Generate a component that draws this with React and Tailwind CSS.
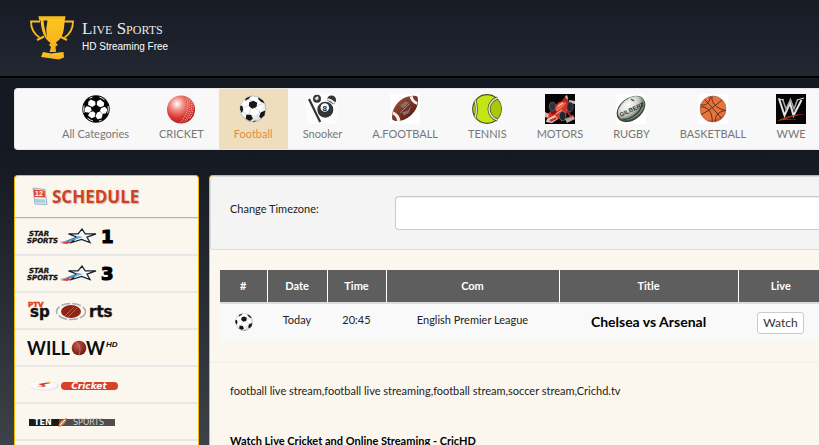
import React from 'react'

const BallIcon = () => (
  <svg width="30" height="30" viewBox="0 0 30 30">
    <circle cx="15" cy="15" r="13.7" fill="#050505" />
    <g fill="none" stroke="#fff" strokeWidth="0.9">
      <path d="M8.5 4.3A12.4 12.4 0 0 1 11.5 3.1M18.5 3.1A12.4 12.4 0 0 1 23.5 5.9M27 12A12.4 12.4 0 0 1 26.6 19.3M20.5 26.2A12.4 12.4 0 0 1 18 27M12 27A12.4 12.4 0 0 1 6.5 24.1M3.2 19A12.4 12.4 0 0 1 3.1 11.5" />
    </g>
    <g fill="#fff">
      <path d="M9.8 5.6l4.4 1.8.3 3.4-3.2 2.3-4.2-2 .2-3.3z" />
      <path d="M19.2 5.6l4 3.2-.5 3.2-3.7 1.3-3.2-2.4.2-3.5z" />
      <path d="M20.2 14l3.8-1.2 2.5 2.9-1.9 3.9-3.5.1-2.2-2.6z" />
      <path d="M16.2 18.4l2.6-.8 2.8 2.7-1 4-4 1-2.2-3.1z" />
      <path d="M8.9 18.3l3.2-1.1 2.3 1.8-.7 3.9-3.2 1.4-3.5-2.9z" />
      <path d="M5.9 12l4 1.4.8 3.2-2.8 2.1-3.8-.8-.7-3.2z" />
    </g>
  </svg>
)

const FootballIcon = ({ size = 30 }) => (
  <svg width={size} height={size} viewBox="0 0 30 30">
    <defs>
      <radialGradient id="soccer" cx="0.4" cy="0.35" r="0.7">
        <stop offset="0.6" stopColor="#fff" />
        <stop offset="1" stopColor="#cfcfcf" />
      </radialGradient>
    </defs>
    <circle cx="15" cy="15" r="13" fill="url(#soccer)" stroke="#999" strokeWidth="0.5" />
    <g stroke="#bbb" strokeWidth="0.6" fill="none">
      <path d="M15 7L10 5M18 12l6-2M13 14l-2 6M17 14l5 4M11 11l-7 4M11 20l6 3M22 18l-4 5M4 17l4 3" />
    </g>
    <g fill="#161616">
      <path d="M11.2 8.3l4.2-1.6 3.8 2-.7 4.4-4.3 1.6-3.3-2.7z" />
      <path d="M7.8 4.3L13 2.2l-2 2.4-4 2.4z" />
      <path d="M20.3 3.3l4.6 3.1 1.6 3.2-3.2-1.6-3-2.8z" />
      <path d="M2.1 12.3l2.2-.7.9 4.2-1.3 3.3-1.8-3.3z" />
      <path d="M22.6 18.4l4.7-1.8-.9 4.8-3.2 2.9-2-1.4z" />
      <path d="M8.4 20.4l4.8.7 1.7 3.6-3 2.2-4.2-2.2z" />
      <path d="M14.6 27.2l3.8-.7-2.2 1.4z" />
    </g>
  </svg>
)

const CricketIcon = () => (
  <svg width="30" height="30" viewBox="0 0 30 30">
    <defs>
      <radialGradient id="cricket" cx="0.36" cy="0.3" r="0.75">
        <stop offset="0" stopColor="#fff" />
        <stop offset="0.3" stopColor="#f0928a" />
        <stop offset="0.65" stopColor="#dc3834" />
        <stop offset="1" stopColor="#a81c1c" />
      </radialGradient>
    </defs>
    <circle cx="15" cy="15.5" r="14" fill="url(#cricket)" />
    <g fill="none" stroke="#fbb5ac" strokeWidth="0.9" strokeDasharray="1.4 0.8">
      <path d="M20.5 2.8c3 8 1.5 18-6.5 26" />
      <path d="M22.5 3.8c3 8 1.5 17.5-5.5 25" />
      <path d="M24.5 5.5c2.5 7 1 15.5-4.5 22" />
      <path d="M26.5 8c1.5 6 .5 12-3 17" />
    </g>
  </svg>
)

const SnookerIcon = () => (
  <svg width="30" height="30" viewBox="0 0 30 30">
    <rect width="30" height="30" fill="#fcfcfc" />
    <path d="M1 5.5l2-1 11.2 23-2 1z" fill="#333" />
    <circle cx="10" cy="4.8" r="4" fill="#333" />
    <path d="M7.5 4l3.5-2 .8 3-2.6 1.5z" fill="#ddd" />
    <circle cx="24.5" cy="6" r="4.6" fill="#333" />
    <path d="M20 4.5c3-.5 5 1 8.5 4l-2 1.5c-2-2.5-4-3.5-6.5-3.5z" fill="#eee" />
    <circle cx="18.3" cy="15.5" r="9" fill="#fcfcfc" />
    <circle cx="18.3" cy="15.7" r="8" fill="#333" />
    <circle cx="17.8" cy="13.5" r="4.3" fill="#fff" />
    <text x="17.8" y="16.5" textAnchor="middle" fontFamily="Liberation Sans" fontWeight="bold" fontSize="8" fill="#222">8</text>
  </svg>
)

const AmericanIcon = () => (
  <svg width="30" height="30" viewBox="0 0 30 30">
    <defs>
      <linearGradient id="leather" x1="0" y1="0" x2="1" y2="1">
        <stop offset="0" stopColor="#a4553f" />
        <stop offset="0.5" stopColor="#7c3526" />
        <stop offset="1" stopColor="#3c130d" />
      </linearGradient>
    </defs>
    <rect width="30" height="30" fill="#fff" />
    <path d="M2.3 25.5C1 18 5 9 13 4.5 19 1.5 25 1 27.5 2.8c1.5 6-.5 13.5-7 19-6 5-14 7-18.2 3.7z" fill="url(#leather)" />
    <path d="M3.2 17.5c4 1.5 6.8 5 7.3 9.2l-3.3.5c-.5-3.5-2.5-6-4.8-6.7z" fill="#f5efeb" />
    <path d="M19.5 2.5c.8 3.8 3.5 7 7.3 8.2l.8-2.8c-2.8-.8-4.5-3-5-5.8z" fill="#f5efeb" />
    <path d="M10 12l5-4.5 4 1-5.5 5.5zM12 18.5l6-2 3-5-2 7-5 3z" fill="#8f7069" />
    <path d="M10.5 18.5l9-9" stroke="#d8c2bb" strokeWidth="0.9" strokeDasharray="1.5 1" />
  </svg>
)

const TennisIcon = () => (
  <svg width="30" height="30" viewBox="0 0 30 30">
    <circle cx="15" cy="15" r="14.3" fill="#c4e413" stroke="#4b5222" strokeWidth="1.2" />
    <path d="M25 5a14 14 0 0 1 0 20c-5-1-8-5-8-10s3-9 8-10z" fill="#a8c80f" />
    <g fill="none">
      <path d="M25.5 4c-5 1.5-8.5 6-8.5 11s3.5 9.5 8.5 11" stroke="#4c5421" strokeWidth="3" />
      <path d="M25.5 4c-5 1.5-8.5 6-8.5 11s3.5 9.5 8.5 11" stroke="#dfe3d3" strokeWidth="1.5" />
      <path d="M3 6.5c1.8 5 1.8 12.5 0 17" stroke="#4c5421" strokeWidth="3" />
      <path d="M3 6.5c1.8 5 1.8 12.5 0 17" stroke="#dfe3d3" strokeWidth="1.5" />
    </g>
  </svg>
)

const MotorsIcon = () => (
  <svg width="30" height="30" viewBox="0 0 30 30">
    <rect width="30" height="30" fill="#050505" />
    <path d="M15 9l4-5 2-3 2 1 0 5 4 3-1 8-6 2z" fill="#a9231c" />
    <path d="M2 21l7-8 5-5 7-1 3 8-5 7-8 4-8-1z" fill="#d93023" />
    <path d="M10 14l6-6 5 1-4 5-7 5z" fill="#f2684f" />
    <path d="M20 3l2-2 1 5zM24 6l6 1v3l-6-1z" fill="#c9c4c4" />
    <path d="M5 17l5-2 2 3-5 3z" fill="#7d1610" />
    <ellipse cx="7.5" cy="12.5" rx="3.3" ry="4.2" fill="#30343a" stroke="#6d7278" strokeWidth="0.6" />
    <ellipse cx="25" cy="13" rx="3.2" ry="5" fill="#25282e" stroke="#6d7278" strokeWidth="0.6" />
    <ellipse cx="17.5" cy="22" rx="3.4" ry="4.8" fill="#24262a" stroke="#8b8b8b" strokeWidth="0.7" />
    <path d="M2 25l8-4 3 4-6 4-6-1z" fill="#e0cfcb" />
    <path d="M4 26l7-3 1 2-6 3z" fill="#cf3024" />
    <path d="M20 25l8-4 2 4-8 4z" fill="#b5a6a5" />
    <path d="M0 18l4 2-1 4-3-1z" fill="#f7a598" />
    <path d="M22 24l6-2M23 19l3 3" stroke="#cf3024" strokeWidth="1.3" />
    <path d="M13 12l5-3M11 20l6-4" stroke="#fff" strokeWidth="0.7" />
  </svg>
)

const RugbyIcon = () => (
  <svg width="30" height="30" viewBox="0 0 30 30">
    <defs>
      <radialGradient id="rugby" cx="0.45" cy="0.3" r="0.7">
        <stop offset="0" stopColor="#fff" />
        <stop offset="0.6" stopColor="#cfd2cf" />
        <stop offset="1" stopColor="#5a5f5a" />
      </radialGradient>
    </defs>
    <rect width="30" height="30" fill="#fff" />
    <g transform="rotate(-38 15 15)">
      <ellipse cx="15" cy="15" rx="16" ry="11" fill="#3c423a" />
      <ellipse cx="15.5" cy="14.5" rx="15" ry="9.8" fill="#779a5e" />
      <ellipse cx="15.8" cy="13.8" rx="14.5" ry="9" fill="url(#rugby)" />
      <path d="M2 18c7 6 19 6 26-1" fill="none" stroke="#3d443b" strokeWidth="1.2" />
    </g>
    <text x="15.5" y="18" transform="rotate(-25 15 15)" textAnchor="middle" fontFamily="Liberation Sans" fontWeight="bold" fontSize="6" fill="#2d332d">GILBERT</text>
    <path d="M15 5l3 2" stroke="#555" strokeWidth="1.5" />
  </svg>
)

const BasketballIcon = () => (
  <svg width="30" height="30" viewBox="0 0 30 30">
    <rect width="30" height="30" fill="#fff" />
    <circle cx="15" cy="15" r="13" fill="#e9733d" />
    <path d="M27 19A13 13 0 0 1 8 26c7 1 14-1 19-7z" fill="#c9572a" />
    <g fill="none" stroke="#54301f" strokeWidth="1">
      <path d="M6.5 5.5C12 11 19 19 23.5 24.5" />
      <path d="M24 6C18 11 9 18 3 20.5" />
      <path d="M14 2.2c-1 6 3.5 12 13.5 14.3" />
      <path d="M2.2 13c7-1 12.5 5 12 14.8" />
      <path d="M2.5 10.5c4.5 2 9-1 10-8" />
      <path d="M17.5 27.5c-.5-6 3-10 10-11" />
    </g>
    <circle cx="15" cy="15" r="13" fill="none" stroke="#8b6250" strokeWidth="0.6" />
  </svg>
)

const WweIcon = () => (
  <svg width="30" height="30" viewBox="0 0 30 30">
    <rect width="30" height="30" fill="#050505" />
    <g fill="none" strokeLinejoin="miter">
      <path d="M3 4.5l5.5 17 5.5-12.5 3.5 12.5 8-15.500" stroke="#e4e4e4" strokeWidth="2" />
      <path d="M6.5 5l3.5 10 4.5-9.5 3.5 9.5 3.5-9.5" stroke="#a5a5a5" strokeWidth="1.5" />
      <path d="M2 5l6 1M21 6l7-2" stroke="#ddd" strokeWidth="1" />
    </g>
    <path d="M1 27c7-4 17-7 28-7-9 2-15 3-19 5 5-.5 8-.5 12 .5-8 0-14 0-21 1.5z" fill="#a8331c" />
  </svg>
)

const Trophy = () => (
  <svg width="46" height="46" viewBox="0 0 46 46" className="shrink-0">
    <defs>
      <linearGradient id="gold" x1="0" y1="0" x2="0" y2="1">
        <stop offset="0" stopColor="#fcc51f" />
        <stop offset="1" stopColor="#f6ae22" />
      </linearGradient>
    </defs>
    <path d="M9.5 1.2h27l-.8 4.2H10.3z" fill="url(#gold)" />
    <path d="M11 6.5H2c0 7.500 3 12.500 8.500 16M35 6.500h9c0 7.500-3 12.500-8.500 16" fill="none" stroke="#f9b920" strokeWidth="1.8" />
    <path d="M8 25l7-3.5M31 21.5l7 3.5" stroke="#f9b920" strokeWidth="2.2" />
    <path d="M11.5 4h24c0 9-1 16-5 20.5-1.5 1.5-3 2-3.5 3.5l2 2-2.5 1.5.5 5.5h-6.5l1.5-5-2-2 1.5-2c-6-4-9.5-12-10-24z" fill="url(#gold)" />
    <path d="M14.5 5.5l.8 6 2.4 11-.4-9 1.2-8z" fill="#1e222c" />
    <path d="M14 37l8 1.5 12.5-1.5.5 5.5-5 2-18-2.5z" fill="url(#gold)" />
  </svg>
)

const categories = [
  { name: 'All Categories', icon: <BallIcon /> },
  { name: 'CRICKET', icon: <CricketIcon /> },
  { name: 'Football', icon: <FootballIcon />, active: true },
  { name: 'Snooker', icon: <SnookerIcon /> },
  { name: 'A.FOOTBALL', icon: <AmericanIcon /> },
  { name: 'TENNIS', icon: <TennisIcon /> },
  { name: 'MOTORS', icon: <MotorsIcon /> },
  { name: 'RUGBY', icon: <RugbyIcon /> },
  { name: 'BASKETBALL', icon: <BasketballIcon /> },
  { name: 'WWE', icon: <WweIcon /> },
]

const StarSports = ({ number }) => (
  <svg width="92" height="20" viewBox="0 0 92 20">
    <text fontFamily="DejaVu Sans" fontWeight="bold" fontStyle="italic" fontSize="7" fill="#111" stroke="#111" strokeWidth="0.3">
      <tspan x="2" y="9">STAR</tspan>
      <tspan x="0" y="16">SPORTS</tspan>
    </text>
    <path d="M31 15c8 0 12-4 22-6l-4 5c-6-1-10 1-18 1z" fill="#3f8ed0" />
    <path d="M33 16l8-2 5 1-6 2z" fill="#c9483b" />
    <path d="M55 2l3.2 4.8H69l-9 3.4 3 5.3-8.5-3-10 3 5-5.5-8-3.2h9.5z" fill="#f7f7f7" stroke="#16202c" strokeWidth="1.3" />
    <path d="M44 14l7-5 5 1z" fill="#69aadb" />
    <text x="74" y="16" fontFamily="DejaVu Sans" fontWeight="bold" fontSize="18" stroke="#000" strokeWidth="1.2">{number}</text>
  </svg>
)

const PtvSports = () => (
  <svg width="92" height="20" viewBox="0 0 92 20">
    <g fontFamily="DejaVu Sans" fontWeight="bold" fontSize="15" fill="#111" stroke="#111" strokeWidth="0.4">
      <text x="3" y="16">sp</text>
      <text x="62" y="16">rts</text>
    </g>
    <text x="1" y="6" fontFamily="DejaVu Sans" fontWeight="bold" fontSize="7" fill="#d8431e" stroke="#d8431e" strokeWidth="0.5">PTV</text>
    <ellipse cx="44" cy="10.5" rx="14.5" ry="8" fill="none" stroke="#a9adb0" strokeWidth="1.5" strokeDasharray="9 2" />
    <ellipse cx="44" cy="10.5" rx="10" ry="6.5" fill="#8e2318" />
    <path d="M38 15l9-9M41 16l9-9" stroke="#d9806b" strokeWidth="0.7" />
  </svg>
)

const Willow = () => (
  <svg width="92" height="20" viewBox="0 0 92 20">
    <defs>
      <radialGradient id="willow" cx="0.4" cy="0.35" r="0.7">
        <stop offset="0" stopColor="#c4544a" />
        <stop offset="1" stopColor="#641512" />
      </radialGradient>
    </defs>
    <g fontFamily="Lato" fontWeight="bold" fontSize="18" fill="#0d0d0d">
      <text x="0" y="17">WILL</text>
      <text x="59" y="17">W</text>
    </g>
    <circle cx="52" cy="10" r="7.3" fill="url(#willow)" />
    <path d="M49 4c4 3 5 8 3 13" fill="none" stroke="#d98a80" strokeWidth="0.7" />
    <text x="79" y="9" fontFamily="Liberation Sans" fontWeight="bold" fontStyle="italic" fontSize="8" fill="#111">HD</text>
  </svg>
)

const SkyCricket = () => (
  <svg width="92" height="20" viewBox="0 0 92 20">
    <ellipse cx="17.5" cy="11" rx="14.5" ry="4.5" fill="#e5e5e3" />
    <ellipse cx="16.5" cy="10.5" rx="13.5" ry="4" fill="#fafafa" />
    <path d="M9 12l7-1-5-2 9-1.5 4 .5-7 1.5 2 2z" fill="#d5392b" />
    <path d="M20 8l3-1" stroke="#f3a43c" strokeWidth="1" />
    <rect x="34" y="7" width="57" height="8" rx="4" fill="#d8402a" />
    <text x="62" y="14" textAnchor="middle" fontFamily="DejaVu Sans" fontWeight="bold" fontStyle="italic" fontSize="9" fill="#fff">Cricket</text>
  </svg>
)

const TenSports = () => (
  <svg width="92" height="20" viewBox="0 0 92 20">
    <rect x="2" y="7" width="86" height="7" fill="#4d4d4d" />
    <rect x="2" y="7" width="30" height="7" fill="#1b1b1b" />
    <g fontFamily="DejaVu Sans" fontSize="8">
      <text x="7" y="13" fontWeight="bold" fill="#fff">TEN</text>
      <text x="46" y="13" fill="#d5d5d5">SPORTS</text>
    </g>
    <path d="M31 15c1-5 4-8 9-9-1 5-4 8-9 9z" fill="#ea7a38" />
    <path d="M33 13l5-5" stroke="#fff" strokeWidth="1" />
  </svg>
)

const channels = [
  { name: 'Star Sports 1', logo: <StarSports number="1" /> },
  { name: 'Star Sports 3', logo: <StarSports number="3" /> },
  { name: 'PTV Sports', logo: <PtvSports /> },
  { name: 'Willow HD', logo: <Willow /> },
  { name: 'Sky Cricket', logo: <SkyCricket /> },
  { name: 'Ten Sports', logo: <TenSports /> },
]

const matches = [
  { date: 'Today', time: '20:45', com: 'English Premier League', title: 'Chelsea vs Arsenal' },
]

const Header = () => (
  <header className="h-[78px] shrink-0 border-b-2 border-black bg-linear-to-b from-[#171b24] to-[#232733]">
    <a href="#" className="flex w-fit gap-[7px] pl-[29px] pt-[15px] text-white">
      <Trophy />
      <span className="flex flex-col pt-1">
        <span className="font-['Liberation_Serif',serif] text-[17px] text-[#e9e9e9] [font-variant:small-caps]">Live Sports</span>
        <span className="font-['Liberation_Sans',sans-serif] text-[10px] leading-4">HD Streaming Free</span>
      </span>
    </a>
  </header>
)

const CategoryNav = () => (
  <nav className="ml-[14px] mt-[10px] flex shrink-0 overflow-hidden rounded-l border border-r-0 border-[#e7e7e7] bg-[#f8f8f8] pl-8">
    {categories.map((item) => (
      <a
        key={item.name}
        href="#"
        className={`flex h-[60px] shrink-0 flex-col items-center px-[15px] pt-[5px] ${item.active ? 'bg-[#eedebd] text-[#e98b3a]' : 'text-[#777]'}`}
      >
        {item.icon}
        {item.name}
      </a>
    ))}
  </nav>
)

const Sidebar = () => (
  <aside className="w-[185px] shrink-0 overflow-hidden rounded-t border border-b-0 border-[#f5b800] bg-[#fbf6ee]">
    <a href="#" className="flex h-[42px] items-center gap-1 border-b border-[#f5b800] pl-[17px]">
      <svg width="16" height="20" viewBox="0 0 16 20">
        <path d="M1 1l12 1.5 2 15L3 17z" fill="#e6eef3" stroke="#9fb0ba" strokeWidth="1" />
        <path d="M1.5 2.5l11 1 .8 7-11-.5z" fill="#dc4a34" />
        <path d="M3 12l10 .5.5 3.500-10-.5z" fill="#a9cde6" />
        <text x="3" y="9" fontFamily="Liberation Sans" fontWeight="bold" fontSize="7" fill="#fff">12</text>
      </svg>
      <span className="font-['Open_Sans',sans-serif] text-[17px] font-bold text-[#d3401f] [text-shadow:1px_1px_1px_#bbb]">SCHEDULE</span>
    </a>
    <ul className="border-t border-[#e7e7e7]">
      {channels.map((channel) => (
        <li key={channel.name} className="h-[37px] border-b-2 border-[#e7e7e7]">
          <a href="#" aria-label={channel.name} className="flex h-full items-center pl-3">
            {channel.logo}
          </a>
        </li>
      ))}
    </ul>
  </aside>
)

const Schedule = () => (
  <table className="w-full table-fixed border-collapse text-center">
    <colgroup>
      <col className="w-[47px]" />
      <col className="w-[60px]" />
      <col className="w-[59px]" />
      <col className="w-[173px]" />
      <col className="w-[179px]" />
      <col />
    </colgroup>
    <thead>
      <tr className="h-[33px] border-b-2 border-[#ddd] bg-[#5e5e5e] text-white">
        {['#', 'Date', 'Time', 'Com', 'Title', 'Live'].map((head) => (
          <th key={head} className="border-r border-[#fff] font-bold last:border-r-0 last:pl-1">{head}</th>
        ))}
      </tr>
    </thead>
    <tbody>
      {matches.map((match) => (
        <tr key={match.title} className="h-[39px] bg-[#f9f9f9] align-top">
          <td className="pt-2"><span className="flex justify-center"><FootballIcon size={20} /></span></td>
          <td className="pt-1.5">{match.date}</td>
          <td className="pt-1.5">{match.time}</td>
          <td className="pt-1.5">{match.com}</td>
          <td className="pt-2 text-[14px] font-bold leading-5 text-black">{match.title}</td>
          <td className="pl-1 pt-2">
            <button className="h-[22px] rounded-[3px] border border-[#ccc] bg-white px-[5px] text-[12px] leading-5 text-[#333]">Watch</button>
          </td>
        </tr>
      ))}
    </tbody>
  </table>
)

const App = () => {
  return (
    <div className="flex h-screen flex-col overflow-hidden bg-linear-to-b from-[#151921] from-35% to-[#3d4148] font-['Lato',sans-serif] text-[11px] leading-5 text-[#222]">
      <Header />
      <CategoryNav />
      <div className="ml-[14px] mt-[25px] flex flex-1 gap-2.5">
        <Sidebar />
        <main className="min-w-0 flex-1 rounded-tl border-l border-t border-[#f5b800] bg-[#fbf6ee]">
          <form className="flex h-[74px] items-start rounded-l border border-r-0 border-[#ddd] bg-[#f4f4f4] pl-[19px] pt-[19px]">
            <label htmlFor="timezone" className="w-[165px] shrink-0 pt-[3px]">Change Timezone:</label>
            <select id="timezone" className="h-[34px] flex-1 appearance-none rounded-l border border-r-0 border-[#ccc] bg-white px-3 shadow-[inset_0_1px_1px_rgba(0,0,0,0.075)]">
              <option></option>
            </select>
          </form>
          <div className="pl-2.5 pt-5">
            <Schedule />
          </div>
          <hr className="mt-5 border-[#eee]" />
          <p className="pl-5 pt-[18px]">football live stream,football live streaming,football stream,soccer stream,Crichd.tv</p>
          <h2 className="pl-5 pt-[30px] font-bold text-black">Watch Live Cricket and Online Streaming - CricHD</h2>
        </main>
      </div>
    </div>
  )
}

export default App
